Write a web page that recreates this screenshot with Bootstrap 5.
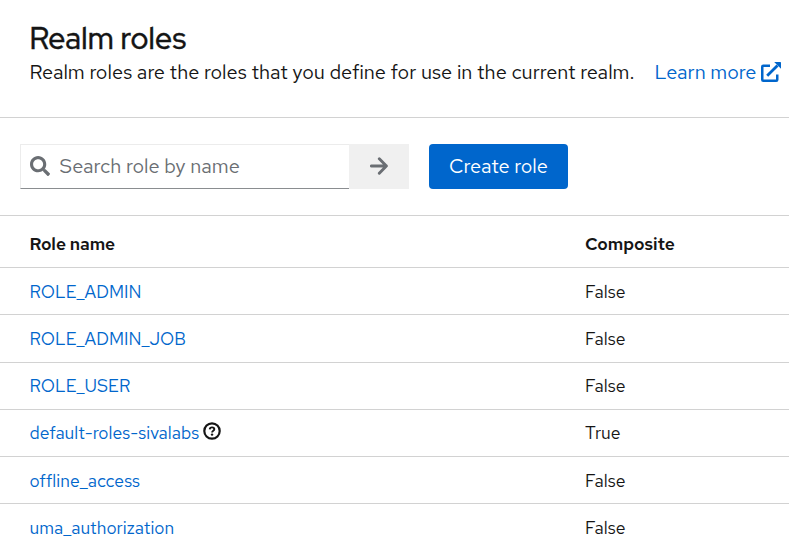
<!DOCTYPE html>
<html lang="en">
<head>
<meta charset="utf-8">
<meta name="viewport" content="width=device-width, initial-scale=1">
<title>Realm roles</title>
<link href="https://cdn.jsdelivr.net/npm/bootstrap@5.3.0/dist/css/bootstrap.min.css" rel="stylesheet">
<style>
body{font-family:"Red Hat Text","Inter",sans-serif;color:#151515;font-size:17.5px;overflow:hidden;background:#fff}
a{color:#06c}
.page-head{height:118px;padding:19px 0 0 29.500px;border-bottom:1px solid #d2d2d2}
.page-title{font-family:"Red Hat Display","Inter",sans-serif;font-size:30px;line-height:38px;font-weight:500;letter-spacing:.2px;-webkit-text-stroke:.3px #151515}
.page-text{font-size:20px;line-height:30px}
.more-link{margin-left:20px}
.more-link svg{margin:-1px 0 0 5px}
.tools{height:98px;padding:26px 20px 0;border-bottom:1px solid #d2d2d2;gap:20px}
.search-box{width:329px;height:45px;border:1px solid #ececec;border-right:0;border-bottom-color:#8a8d90;padding-left:9px}
.search-box svg{margin-top:-1px}
.search-box .form-control{font-size:20px;padding:0 0 2px 9.500px}
.search-box .form-control::placeholder{color:#6a6e73;opacity:1}
.go{width:60px;height:45px;background:#f0f0f0}
.go svg{margin-top:-1px}
.create{width:139px;height:45px;background:#06c;--bs-btn-font-size:20px;--bs-btn-color:#fff;--bs-btn-hover-color:#fff;--bs-btn-border-radius:4px}
.create span{display:block;padding-bottom:2px}
.roles{table-layout:fixed;--bs-table-color:#151515;border-color:#d2d2d2}
.roles th,.roles td{padding:0 0 0 30px;height:47px;line-height:26px;border-bottom:1px solid #d2d2d2;vertical-align:middle}
.roles th:first-child,.roles td:first-child{padding-left:29.500px}
.roles td a{letter-spacing:.03px}
.roles thead th{height:51px;padding-top:5px;font-weight:600;letter-spacing:-.07px}
.roles tr.tall td{height:48px}
.roles tr.low td{padding-top:2px}
.roles tr:last-child td{border-bottom:0}
.roles thead tr:last-child th{border-bottom:1px solid #d2d2d2}
.name-col{width:555px}
.help{margin:-3px 0 0 3.500px}
</style>
</head>
<body>
<header class="page-head">
  <h1 class="page-title mb-0"><span>Realm roles</span></h1>
  <div class="page-text d-flex align-items-center text-nowrap">
    <span>Realm roles are the roles that you define for use in the current realm.</span>
    <a href="#" class="more-link text-decoration-none d-flex align-items-center"><span>Learn more</span>
      <svg width="20" height="20" viewBox="0 0 20 20" fill="none" stroke="#06c" stroke-width="2.5"><path d="M9 3.750H2.250a1 1 0 0 0-1 1v13a1 1 0 0 0 1 1h13a1 1 0 0 0 1-1V12.500"/><path d="M6.200 13.800 16.500 3.500" stroke-width="2.800"/><path d="M13.200 0H19.400a.6.6 0 0 1 .6.6V6.800z" fill="#06c" stroke="none"/></svg></a>
  </div>
</header>
<div class="tools d-flex align-items-start">
  <div class="d-flex">
    <label class="search-box d-flex align-items-center">
      <svg class="flex-shrink-0" width="20" height="20" viewBox="0 0 512 512" fill="#6a6e73"><path d="M505 442.700 405.300 343c-4.500-4.500-10.600-7-17-7H372c27.600-35.300 44-79.700 44-128C416 93.100 322.900 0 208 0S0 93.100 0 208s93.100 208 208 208c48.300 0 92.700-16.400 128-44v16.300c0 6.400 2.500 12.500 7 17l99.700 99.700c9.400 9.400 24.600 9.400 33.900 0l28.300-28.300c9.400-9.400 9.400-24.600.1-34zM208 336c-70.700 0-128-57.200-128-128 0-70.700 57.200-128 128-128 70.700 0 128 57.200 128 128 0 70.700-57.200 128-128 128z"/></svg>
      <input class="form-control border-0 shadow-none bg-transparent" placeholder="Search role by name">
    </label>
    <button class="go btn rounded-0 border-0 p-0 d-flex align-items-center justify-content-center" aria-label="Search">
      <svg width="18" height="18" viewBox="0 0 18 18" fill="none" stroke="#6a6e73" stroke-width="2.900" stroke-linecap="round" stroke-linejoin="round"><path d="M1.400 9h15M9.300 1.700 16.400 9l-7.100 7.300"/></svg>
    </button>
  </div>
  <button class="create btn border-0 p-0"><span>Create role</span></button>
</div>
<table class="roles table mb-0">
  <colgroup><col class="name-col"><col></colgroup>
  <thead><tr><th>Role name</th><th>Composite</th></tr></thead>
  <tbody>
    <tr class="low"><td><a class="text-decoration-none" href="#">ROLE_ADMIN</a></td><td>False</td></tr>
    <tr class="tall low"><td><a class="text-decoration-none" href="#">ROLE_ADMIN_JOB</a></td><td>False</td></tr>
    <tr><td><a class="text-decoration-none" href="#">ROLE_USER</a></td><td>False</td></tr>
    <tr><td><div class="d-flex align-items-center"><a class="text-decoration-none" href="#">default-roles-sivalabs</a><svg class="help" width="18" height="18" viewBox="0 0 18 18" fill="none" stroke="#151515"><circle cx="9" cy="9" r="7.700" stroke-width="2.200"/><path d="M6.700 7.300C6.900 5.900 7.900 5.400 9 5.400c1.300 0 2.300.700 2.300 1.800 0 1.500-2.200 1.500-2.200 3.200" stroke-width="1.900"/><circle cx="9.050" cy="12.600" r="1.200" fill="#151515" stroke="none"/></svg></div></td><td>True</td></tr>
    <tr class="low"><td><a class="text-decoration-none" href="#">offline_access</a></td><td>False</td></tr>
    <tr class="low"><td><a class="text-decoration-none" href="#">uma_authorization</a></td><td>False</td></tr>
  </tbody>
</table>
<script src="https://cdn.jsdelivr.net/npm/bootstrap@5.3.0/dist/js/bootstrap.bundle.min.js"></script>
</body>
</html>
